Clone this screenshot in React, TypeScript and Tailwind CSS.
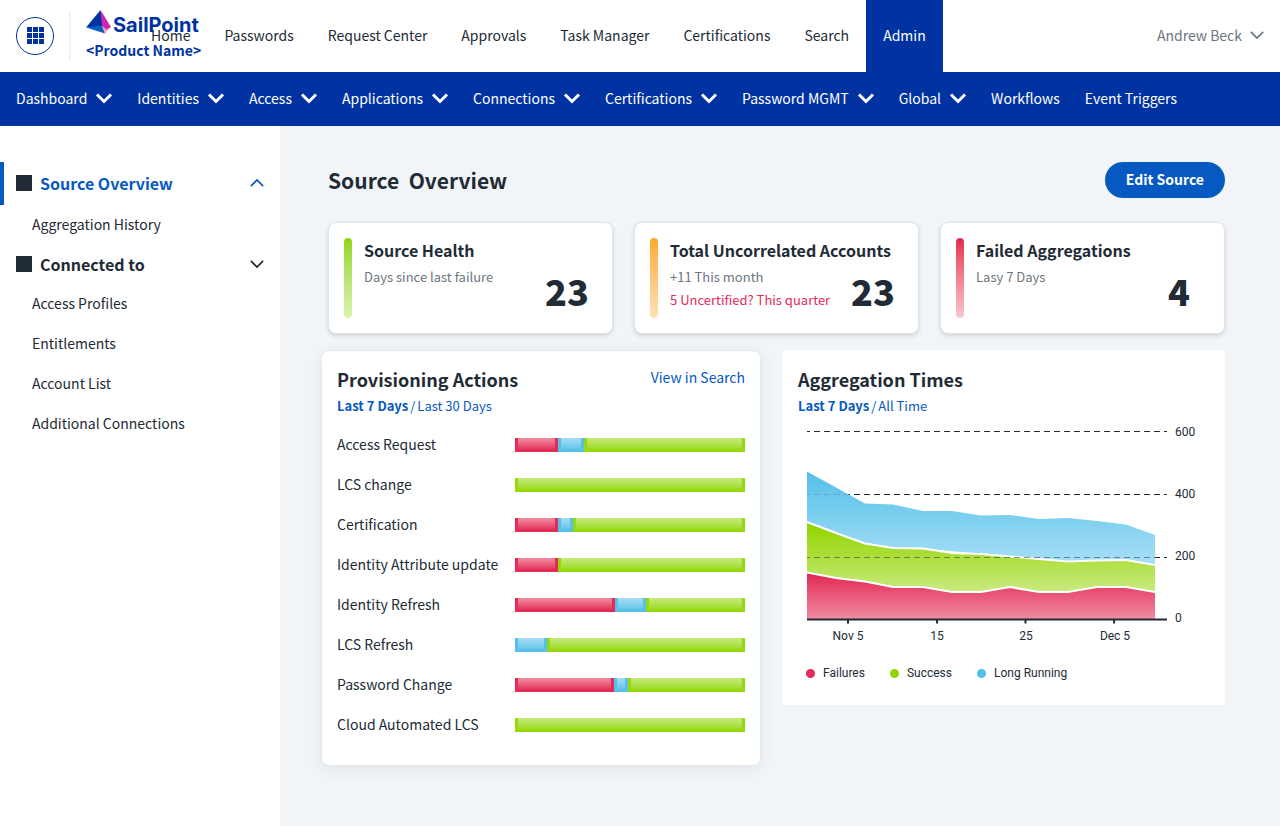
import { useState } from "react";
import clsx from "clsx";

const topNav = [
  "Home",
  "Passwords",
  "Request Center",
  "Approvals",
  "Task Manager",
  "Certifications",
  "Search",
  "Admin",
];

const adminNav = [
  { label: "Dashboard", menu: true },
  { label: "Identities", menu: true },
  { label: "Access", menu: true },
  { label: "Applications", menu: true },
  { label: "Connections", menu: true },
  { label: "Certifications", menu: true },
  { label: "Password MGMT", menu: true },
  { label: "Global", menu: true },
  { label: "Workflows", menu: false },
  { label: "Event Triggers", menu: false },
];

type Tone = "failure" | "running" | "success";

const segmentStyles: Record<Tone, string> = {
  failure: "border-[#e22b57] from-[#f08ba3] to-[#e4365f]",
  running: "border-[#56c0e8] from-[#a5dcf4] to-[#66c6ea]",
  success: "border-[#96d80c] from-[#c5ea77] to-[#9edb1f]",
};

const provisioning = [
  { label: "Access Request", failure: 43, running: 26, success: 161 },
  { label: "LCS change", failure: 0, running: 0, success: 230 },
  { label: "Certification", failure: 43, running: 15, success: 172 },
  { label: "Identity Attribute update", failure: 43, running: 0, success: 187 },
  { label: "Identity Refresh", failure: 100, running: 31, success: 99 },
  { label: "LCS Refresh", failure: 0, running: 32, success: 198 },
  { label: "Password Change", failure: 99, running: 14, success: 117 },
  { label: "Cloud Automated LCS", failure: 0, running: 0, success: 230 },
];

const tones: Tone[] = ["failure", "running", "success"];

type ChevronProps = {
  className?: string;
  width?: number;
  up?: boolean;
};

const Chevron = ({ className, width = 2, up = false }: ChevronProps) => (
  <svg
    viewBox="0 0 16 16"
    className={clsx("shrink-0 overflow-visible", className)}
    fill="none"
    stroke="currentColor"
    strokeWidth={width}
    aria-hidden="true"
  >
    <path d={up ? "M1 11.5 8 4.5l7 7" : "M1 4.5l7 7 7-7"} />
  </svg>
);

const Logo = () => (
  <a href="#" className="flex w-[116px] shrink-0 flex-col text-[#0033a1]">
    <span className="flex h-7 items-start gap-0.5">
      <svg viewBox="0 0 25 24" className="h-6 w-[25px] shrink-0" aria-hidden="true">
        <path d="M14.5 0 0 17.5l17-1z" fill="#0033a1" />
        <path d="M0 17.5l16.5-1.500 2.5 7.500z" fill="#0a5fc4" />
        <path d="M16 16l8.500 1-5.500 6.500z" fill="#f8a3bd" />
        <path d="M14.5 0 25 17l-4.500 2.500L16 16z" fill="#cc27b0" />
      </svg>
      <span className="font-[Inter] text-[20px] leading-[30px] font-bold">
        SailPoint
      </span>
    </span>
    <span className="text-[14px] leading-6 font-bold whitespace-nowrap">
      &lt;Product Name&gt;
    </span>
  </a>
);

const Header = () => (
  <header className="flex h-18 items-stretch bg-white">
    <div className="flex items-center pl-4">
      <button
        aria-label="Apps"
        className="flex h-[38px] w-[38px] items-center justify-center rounded-full border border-[#0033a1] pb-0.5"
      >
        <span className="grid grid-cols-3 gap-px">
          {Array.from({ length: 9 }, (_, i) => (
            <span key={i} className="h-[5px] w-[5px] bg-[#0033a1]" />
          ))}
        </span>
      </button>
      <div className="mr-[15px] ml-[15px] h-12 w-0.5 bg-[#edf1f4]" />
      <Logo />
    </div>
    <nav className="-ml-17 flex items-stretch">
      {topNav.map((item) => (
        <a
          key={item}
          href="#"
          className={clsx(
            "flex items-center px-[17px] pb-0.5 whitespace-nowrap",
            item === "Admin" && "bg-[#0033a1] text-white"
          )}
        >
          {item}
        </a>
      ))}
    </nav>
    <button className="mr-4 ml-auto flex items-center gap-2 pb-0.5 whitespace-nowrap text-[#6c7680]">
      Andrew Beck
      <Chevron className="h-3.5 w-3.5" />
    </button>
  </header>
);

const AdminBar = () => (
  <nav className="flex h-[54px] items-center gap-[25px] bg-[#0033a1] px-4 pb-0.5 text-white">
    {adminNav.map(({ label, menu }) =>
      menu ? (
        <button key={label} className="flex items-center gap-[9px] whitespace-nowrap">
          {label}
          <Chevron width={3} className="h-4 w-4" />
        </button>
      ) : (
        <a key={label} href="#" className="whitespace-nowrap">
          {label}
        </a>
      )
    )}
  </nav>
);

type SectionProps = {
  title: string;
  links: string[];
  active?: boolean;
};

const SidebarSection = ({ title, links, active = false }: SectionProps) => (
  <div>
    <button
      className={clsx(
        "flex w-full items-center gap-2 border-l-4 pr-4 pb-0.5 pl-3 text-[16px] font-bold",
        active
          ? "h-[43px] border-[#0559c0] text-[#0559c0]"
          : "h-[39px] border-transparent"
      )}
    >
      <span className="h-4 w-4 bg-[#212b36]" />
      {title}
      <Chevron up={active} className="ml-auto h-3.5 w-3.5" />
    </button>
    <ul>
      {links.map((link) => (
        <li key={link}>
          <a href="#" className="flex h-10 items-center pb-0.5 pl-8">
            {link}
          </a>
        </li>
      ))}
    </ul>
  </div>
);

type StatCardProps = {
  title: string;
  note: string;
  alert?: string;
  value: number;
  bar: string;
};

const StatCard = ({ title, note, alert, value, bar }: StatCardProps) => (
  <section className="flex h-28 rounded-lg border border-[#dfe3e8] bg-white p-[15px] shadow-[0_2px_4px_rgba(33,43,54,0.16)]">
    <div className={clsx("h-20 w-2 shrink-0 rounded-full bg-linear-to-b", bar)} />
    <div className="ml-3 flex-1">
      <h2 className="text-[16px] leading-6 font-bold whitespace-nowrap">{title}</h2>
      <div className="flex justify-between pt-[3px]">
        <div className="text-[13px] leading-[23px] whitespace-nowrap">
          <p className="text-[#6c7680]">{note}</p>
          {alert && <p className="text-[#e22b57]">{alert}</p>}
        </div>
        <p className="w-15 text-center text-[36px] leading-[50px] font-black">{value}</p>
      </div>
    </div>
  </section>
);

type RangeProps = {
  ranges: string[];
};

const RangeSwitch = ({ ranges }: RangeProps) => {
  const [selected, setSelected] = useState(ranges[0]);

  return (
    <div className="flex gap-0.5 text-[13px] leading-[26px] text-[#0559c0]">
      {ranges.map((range, i) => (
        <span key={range} className="flex gap-0.5">
          {i > 0 && <span>/</span>}
          <button
            onClick={() => setSelected(range)}
            className={clsx(range === selected && "font-bold")}
          >
            {range}
          </button>
        </span>
      ))}
    </div>
  );
};

const ProvisioningActions = () => (
  <section className="rounded-lg border border-[#e3e8ec] bg-white px-[15px] pt-3.5 pb-5 shadow-[0_4px_16px_rgba(33,43,54,0.08)]">
    <div className="flex items-start justify-between">
      <h2 className="text-[18px] leading-7 font-bold">Provisioning Actions</h2>
      <a href="#" className="leading-6 text-[#0559c0]">
        View in Search
      </a>
    </div>
    <RangeSwitch ranges={["Last 7 Days", "Last 30 Days"]} />
    <ul className="mt-1.5">
      {provisioning.map((row) => (
        <li key={row.label} className="flex h-10 items-center">
          <span className="w-[178px] shrink-0 pb-0.5 whitespace-nowrap">{row.label}</span>
          <span className="flex h-3.5 flex-1">
            {tones
              .filter((tone) => row[tone] > 0)
              .map((tone) => (
                <span
                  key={tone}
                  className={clsx(
                    "border-x-3 border-b-3 bg-linear-to-b",
                    segmentStyles[tone]
                  )}
                  style={{ width: `${(row[tone] / 230) * 100}%` }}
                />
              ))}
          </span>
        </li>
      ))}
    </ul>
  </section>
);

const failureLine = "25,154.5 54,160 83,163.5 111,169 141,169 170,174 199,174 228,169 257,174 286,174 315,169 344,169 373,174";
const successLine = "25,104 54,115 83,125.5 111,130 141,130.5 170,135 199,136 228,138.5 257,141 286,143.5 315,142.5 344,142 373,147";
const runningLine = "25,53.5 54,69.5 83,85.5 111,86.5 141,93 170,93 199,97.5 228,97 257,101 286,100 315,103 344,106.5 373,117";

const AggregationChart = () => (
  <svg
    viewBox="16 1 411 229"
    className="block w-full font-[Roboto] text-[12px]"
    role="img"
    aria-label="Aggregation times"
  >
    <defs>
      <linearGradient id="running" x1="0" y1="0" x2="0" y2="1">
        <stop offset="0" stopColor="#54c0e8" />
        <stop offset="1" stopColor="#a8dff6" />
      </linearGradient>
      <linearGradient id="success" x1="0" y1="0" x2="0" y2="1">
        <stop offset="0.05" stopColor="#93d500" />
        <stop offset="1" stopColor="#c9ea80" />
      </linearGradient>
      <linearGradient id="failure" x1="0" y1="0" x2="0" y2="1">
        <stop offset="0" stopColor="#e22550" />
        <stop offset="1" stopColor="#f08ba3" />
      </linearGradient>
    </defs>
    <g stroke="#212b36" strokeDasharray="6 4" strokeDashoffset="3">
      <path d="M25 13.5H385" />
      <path d="M25 76.5H385" />
      <path d="M25 139.5H385" />
    </g>
    <polygon points={`${runningLine} 373,147 344,142 286,143.5 228,138.5 141,130.5 111,130 83,125.5 25,104`} fill="url(#running)" />
    <polygon points={`${successLine} 373,174 25,174`} fill="url(#success)" />
    <polygon points={`${failureLine} 373,201 25,201`} fill="url(#failure)" />
    <polyline points={successLine} fill="none" stroke="#fff" strokeWidth="2.2" />
    <polyline points={failureLine} fill="none" stroke="#fff" strokeWidth="2.2" />
    <g stroke="#212b36" strokeDasharray="6 4" strokeDashoffset="3">
      <path d="M25 76.5H65" strokeOpacity="0.15" />
      <path d="M25 139.5H373" strokeOpacity="0.5" />
    </g>
    <path d="M25 201.5H385" stroke="#212b36" strokeWidth="2" />
    <path d="M66 201v4.5M155 201v4.5M243.5 201v4.5M332 201v4.5" stroke="#212b36" strokeWidth="2" />
    <g fill="#212b36">
      <text x="393" y="18">600</text>
      <text x="393" y="80">400</text>
      <text x="393" y="142">200</text>
      <text x="393" y="204">0</text>
    </g>
    <g fill="#212b36" textAnchor="middle">
      <text x="66" y="222">Nov 5</text>
      <text x="155" y="222">15</text>
      <text x="244" y="222">25</text>
      <text x="333" y="222">Dec 5</text>
    </g>
  </svg>
);

const legend = [
  { label: "Failures", dot: "bg-[#e22b57]" },
  { label: "Success", dot: "bg-[#93d500]" },
  { label: "Long Running", dot: "bg-[#54c0e8]" },
];

const AggregationTimes = () => (
  <section className="rounded bg-white px-4 pt-[15px] pb-[22px]">
    <h2 className="text-[18px] leading-7 font-bold">Aggregation Times</h2>
    <RangeSwitch ranges={["Last 7 Days", "All Time"]} />
    <AggregationChart />
    <ul className="mt-[15px] flex gap-[25px] pl-2 font-[Roboto] text-[12px] leading-5">
      {legend.map(({ label, dot }) => (
        <li key={label} className="flex items-center gap-2">
          <span className={clsx("h-[9px] w-[9px] rounded-full", dot)} />
          {label}
        </li>
      ))}
    </ul>
  </section>
);

export default function App() {
  return (
    <div className="flex min-h-screen flex-col bg-[#f2f5f8] font-['Source_Sans_Pro','Noto_Sans_CJK_SC',sans-serif] text-[14px] leading-6 text-[#212b36]">
      <Header />
      <AdminBar />
      <div className="flex flex-1">
        <aside className="w-[280px] shrink-0 bg-white pt-9">
          <SidebarSection title="Source Overview" links={["Aggregation History"]} active />
          <SidebarSection
            title="Connected to"
            links={["Access Profiles", "Entitlements", "Account List", "Additional Connections"]}
          />
        </aside>
        <main className="flex-1 pt-9 pr-[55px] pb-10 pl-12">
          <div className="flex items-center justify-between">
            <h1 className="text-[21px] leading-9 font-bold whitespace-pre">Source  Overview</h1>
            <button className="h-9 rounded-full bg-[#0559c0] px-[21px] pb-0.5 font-bold text-white">
              Edit Source
            </button>
          </div>
          <div className="mt-6 grid grid-cols-3 gap-[21px]">
            <StatCard
              title="Source Health"
              note="Days since last failure"
              value={23}
              bar="from-[#93d500] to-[#dcf3ae]"
            />
            <StatCard
              title="Total Uncorrelated Accounts"
              note="+11 This month"
              alert="5 Uncertified? This quarter"
              value={23}
              bar="from-[#ffa828] to-[#ffe2b5]"
            />
            <StatCard
              title="Failed Aggregations"
              note="Lasy 7 Days"
              value={4}
              bar="from-[#e22550] to-[#f7c6d2]"
            />
          </div>
          <div className="mt-4 -ml-[7px] grid grid-cols-[440fr_443fr] items-start gap-[21px]">
            <ProvisioningActions />
            <AggregationTimes />
          </div>
        </main>
      </div>
    </div>
  );
}
